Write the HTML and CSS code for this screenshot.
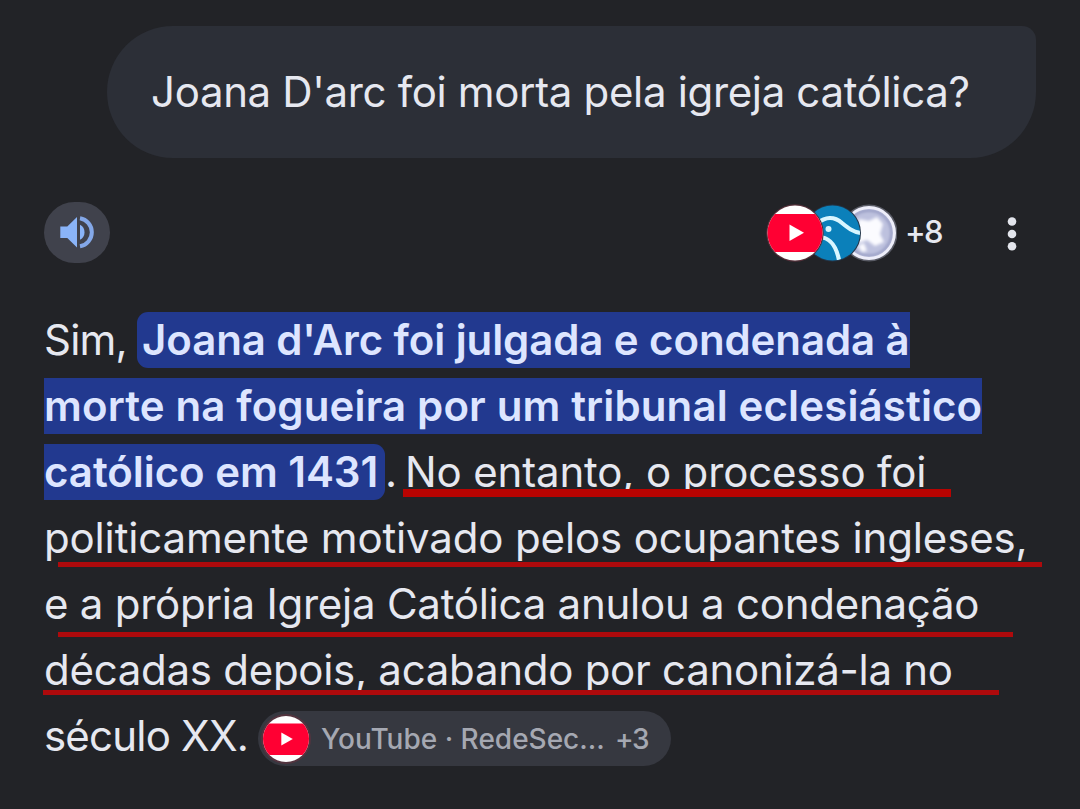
FILE: index.html
```html
<!DOCTYPE html>
<html lang="pt-BR">
<head>
<meta charset="utf-8">
<title>Joana D'arc</title>
<link rel="stylesheet" href="styles.css">
</head>
<body>
<main class="page">
  <div class="question"><span>Joana D'arc foi morta pela igreja católica?</span></div>

  <div class="toolbar">
    <button class="listen" aria-label="Ouvir">
      <svg width="66" height="61" viewBox="0 0 66 61">
        <path fill="#8ab4f8" d="M16.300 24.500h7L33 15v30.500l-9.700-9.500h-7z"/>
        <path fill="#8ab4f8" d="M36 22.800a8.500 8.500 0 0 1 0 15z"/>
        <path fill="none" stroke="#84a8e8" stroke-width="4" d="M36 16.300a14.200 14.200 0 0 1 0 28"/>
      </svg>
    </button>
    <div class="sources">
      <svg class="icons" width="131" height="58" viewBox="0 0 131 58">
        <defs>
          <clipPath id="c1"><circle cx="29" cy="29" r="27.500"/></clipPath>
          <clipPath id="c2"><circle cx="66.500" cy="29" r="27.500"/></clipPath>
          <clipPath id="c3"><circle cx="103" cy="29" r="24"/></clipPath>
          <filter id="soft"><feGaussianBlur stdDeviation="1.800"/></filter>
        </defs>
        <circle cx="103" cy="29" r="28.500" fill="#5a5c66"/>
        <circle cx="103" cy="29" r="27" fill="#eeeefa"/>
        <g clip-path="url(#c3)">
          <circle cx="103" cy="29" r="23" fill="#bdc1de" stroke="#8f95bf" stroke-width="3" filter="url(#soft)"/>
          <g fill="#fbfbff" filter="url(#soft)">
            <path d="M93 15l10 2 8-4 6 7-3 10 4 8-9 4-8-6-11 4-5-6 6-5z"/>
            <path d="M92 42l6-3 3 8-5 1z"/>
          </g>
        </g>
        <circle cx="66.500" cy="29" r="28.500" fill="#23364a"/>
        <circle cx="66.500" cy="29" r="27.500" fill="#0b80ba"/>
        <g clip-path="url(#c2)">
          <path fill="none" stroke="#d8f6ff" stroke-width="4.200" d="M52 19c7-6 16-7 24 0 6 5 11 9 19 10M52 33c12 0 18 8 21 23"/>
          <circle cx="62.500" cy="25" r="3" fill="#d8f6ff"/>
        </g>
        <circle cx="29" cy="29" r="28.700" fill="#55303a"/>
        <circle cx="29" cy="29" r="27.500" fill="#fff"/>
        <g clip-path="url(#c1)"><rect y="10" width="58" height="38" fill="#ff0033"/></g>
        <path fill="#fff" d="M23.500 20.500v16.500l14.500-8.200z"/>
      </svg>
      <span class="count">+8</span>
    </div>
    <button class="menu" aria-label="Mais opções">
      <svg width="10" height="34" viewBox="0 0 10 34" fill="#e3e5ec"><circle cx="5" cy="4.500" r="4.300"/><circle cx="5" cy="17" r="4.300"/><circle cx="5" cy="29.300" r="4.300"/></svg>
    </button>
  </div>

  <div class="answer">
    <div class="line"><span class="sim">Sim,</span><mark class="mark first">Joana d'Arc foi julgada e condenada à</mark></div>
    <div class="line"><mark class="mark middle">morte na fogueira por um tribunal eclesiástico</mark></div>
    <div class="line"><mark class="mark last">católico em 1431</mark><span class="dot">.</span><span class="l3">No entanto, o processo foi</span></div>
    <div class="line"><span class="l4">politicamente motivado pelos ocupantes ingleses,</span></div>
    <div class="line"><span class="l5">e a própria Igreja Católica anulou a condenação</span></div>
    <div class="line"><span class="l6">décadas depois, acabando por canonizá-la no</span></div>
    <div class="line"><span class="l7">século XX.</span>
      <a class="chip">
        <svg width="52" height="52" viewBox="0 0 52 52">
          <clipPath id="c4"><circle cx="26" cy="26" r="23"/></clipPath>
          <circle cx="26" cy="26" r="25" fill="#53343f"/>
          <circle cx="26" cy="26" r="23" fill="#fff"/>
          <g clip-path="url(#c4)"><rect y="10.500" width="52" height="31.500" fill="#ff0033"/></g>
          <path fill="#fff" d="M21.300 19.500v13l11.500-6.500z"/>
        </svg>
        <span class="name">YouTube · RedeSec...</span><span class="more">+3</span>
      </a>
    </div>
    <i class="stroke s1"></i><i class="stroke s2"></i><i class="stroke s3"></i><i class="stroke s4"></i>
  </div>
</main>
</body>
</html>
```
FILE: styles.css
```css
* { box-sizing: border-box; }
body {
  margin: 0;
  background: #222327;
  color: #e6e8f0;
  font-family: Inter, "Open Sans", sans-serif;
  font-size: 42px;
}
.page {
  width: 1080px;
  height: 809px;
  padding: 26px 44px 0;
  overflow: hidden;
}
.question {
  width: 929px;
  height: 132px;
  margin-left: 63px;
  padding-left: 44px;
  border-radius: 66px 14px 66px 66px;
  background: #2c2f37;
  line-height: 132px;
  letter-spacing: -0.34px;
  white-space: nowrap;
}
.toolbar {
  display: flex;
  align-items: center;
  height: 61px;
  margin-top: 44px;
}
button { border: 0; padding: 0; background: none; display: block; }
.listen {
  width: 66px;
  height: 61px;
  border-radius: 31px;
  background: #40424c;
}
button svg, .icons { display: block; }
.sources { display: flex; align-items: center; margin-left: 656px; }
.count {
  width: 44px;
  margin-left: 8px;
  padding-bottom: 1px;
  font-size: 31px;
  font-weight: 500;
  line-height: 56px;
  letter-spacing: -1.8px;
}
.menu { margin: 2px 0 0 58px; }
.answer { position: relative; margin-top: 44px; }
.line {
  display: flex;
  align-items: center;
  height: 66px;
  line-height: 56px;
  white-space: nowrap;
}
.mark {
  height: 56px;
  background: #22398f;
  color: #dde5ff;
  font-weight: 600;
}
.sim { width: 93px; letter-spacing: -0.8px; }
.first { width: 773px; padding-left: 5px; border-radius: 11px 0 0 11px; letter-spacing: -0.1px; }
.middle { width: 938px; letter-spacing: 0.13px; }
.last { width: 341px; border-radius: 0 11px 11px 0; letter-spacing: -0.05px; }
.dot { width: 20px; }
.l3 { letter-spacing: -0.15px; }
.l4 { letter-spacing: -0.15px; }
.l5 { letter-spacing: -0.25px; }
.l6 { letter-spacing: -0.28px; }
.l7 { width: 214px; letter-spacing: -0.8px; }
.chip {
  display: flex;
  align-items: center;
  width: 413px;
  height: 55px;
  margin-top: 5px;
  padding-left: 2px;
  border-radius: 28px;
  background: #363840;
  color: #a5a8b2;
  font-size: 28px;
  font-weight: 500;
}
.name { width: 294px; margin-left: 9px; }
.more { letter-spacing: -1.4px; }
.stroke {
  position: absolute;
  height: 5px;
  background: #ae0a0c;
}
.s1 { left: 359px; top: 182px; width: 548px; height: 8px; background: #b80301; }
.s2 { left: 14px; top: 255px; width: 984px; }
.s3 { left: 14px; top: 325px; width: 955px; }
.s4 { left: -1px; top: 383px; width: 956px; }
```
